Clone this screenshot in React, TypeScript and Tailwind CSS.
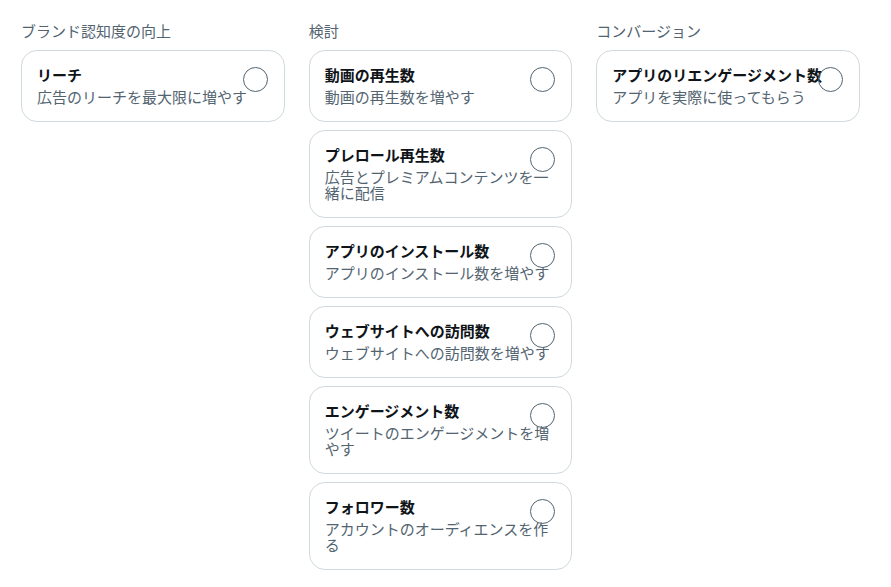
const columns = [
  {
    title: 'ブランド認知度の向上',
    items: [{ name: 'リーチ', desc: '広告のリーチを最大限に増やす' }],
  },
  {
    title: '検討',
    items: [
      { name: '動画の再生数', desc: '動画の再生数を増やす' },
      { name: 'プレロール再生数', desc: '広告とプレミアムコンテンツを一緒に配信' },
      { name: 'アプリのインストール数', desc: 'アプリのインストール数を増やす' },
      { name: 'ウェブサイトへの訪問数', desc: 'ウェブサイトへの訪問数を増やす' },
      { name: 'エンゲージメント数', desc: 'ツイートのエンゲージメントを増やす' },
      { name: 'フォロワー数', desc: 'アカウントのオーディエンスを作る' },
    ],
  },
  {
    title: 'コンバージョン',
    items: [{ name: 'アプリのリエンゲージメント数', desc: 'アプリを実際に使ってもらう' }],
  },
];

const ObjectiveCard = ({ name, desc }: { name: string; desc: string }) => (
  <div className="relative rounded-2xl border border-[#cfd9de] bg-white pl-[15px] pr-4 pt-[14px] pb-4">
    <div className="text-[15px] leading-5 font-bold text-[#0f1419]">{name}</div>
    <div className="mt-1 text-[15px] leading-4 text-[#536471]">{desc}</div>
    <div className="absolute top-4 right-4 h-[25px] w-[25px] rounded-full border border-[#536471]" />
  </div>
);

export default function App() {
  return (
    <div
      className="min-h-screen bg-white pt-[21px] pl-[21px] pr-[31px]"
      style={{ fontFamily: '"Noto Sans CJK JP", "Noto Sans", sans-serif' }}
    >
      <div className="grid grid-cols-3 gap-6">
        {columns.map((col) => (
          <div key={col.title}>
            <div className="mb-[9px] text-[15px] leading-5 text-[#536471]">{col.title}</div>
            <div className="flex flex-col gap-2">
              {col.items.map((item) => (
                <ObjectiveCard key={item.name} name={item.name} desc={item.desc} />
              ))}
            </div>
          </div>
        ))}
      </div>
    </div>
  );
}
